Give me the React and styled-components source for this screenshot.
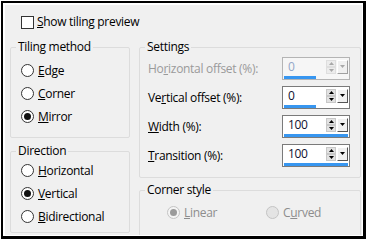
import React from "react";
import styled, { createGlobalStyle } from "styled-components";

const GlobalStyle = createGlobalStyle`
  html, body { margin: 0; padding: 0; background: #fff; }
  body {
    font-family: "Open Sans", "Noto Sans", sans-serif;
    font-size: 12px;
    letter-spacing: -0.3px;
    color: #000;
  }
  * { box-sizing: border-box; }
`;

const Frame = styled.div`
  margin: 1px 0 0 1px;
  width: 365px;
  height: 238px;
  border: solid #000;
  border-width: 2px 3px 3px 2px;
`;

const Panel = styled.div`
  height: 100%;
  background: #f0f0f0;
  border: solid #fff;
  border-width: 2px 1px 1px 2px;
  overflow: hidden;
  display: flex;
  flex-direction: column;
`;

const CheckRow = styled.label`
  margin-top: 9px;
  height: 16px;
  padding-left: 16px;
  display: flex;
  align-items: center;
  gap: 3px;
  line-height: 16px;
`;

const CheckBox = styled.span`
  width: 13px;
  height: 13px;
  border: 1px solid #333;
  background: #fff;
`;

const Columns = styled.div`
  margin-top: 9px;
  padding-left: 5px;
  display: flex;
  align-items: flex-start;
  gap: 9px;
`;

const Column = styled.div`
  width: ${(p) => p.$width}px;
  display: flex;
  flex-direction: column;
`;

const GroupBox = styled.fieldset`
  margin: ${(p) => p.$gap || 0}px 0 0 0;
  padding: 0;
  min-width: 0;
  border: 1px solid #dcdcdc;
  border-radius: 2px;
`;

const Legend = styled.legend`
  margin-left: 5px;
  padding: 0 2px;
  line-height: 16px;
  font-size: 12px;
`;

const GroupBody = styled.div`
  padding: ${(p) => p.$pad};
  display: flex;
  flex-direction: column;
  gap: ${(p) => p.$gap || 0}px;
`;

const RadioRow = styled.label`
  height: 23px;
  display: flex;
  align-items: center;
  gap: 4px;
  color: ${(p) => (p.$disabled ? "#8d8d8d" : "#000")};
  width: ${(p) => (p.$width ? `${p.$width}px` : "auto")};
`;

const RadioCircle = styled.span`
  width: 13px;
  height: 13px;
  border-radius: 50%;
  border: 1px solid ${(p) => (p.$disabled ? "#c4c4c4" : "#333")};
  background: ${(p) => (p.$disabled ? (p.$checked ? "#f4f4f4" : "#e4e4e4") : "#fff")};
  display: flex;
  align-items: center;
  justify-content: center;
  flex: none;
  &::after {
    content: "";
    width: 7px;
    height: 7px;
    border-radius: 50%;
    background: ${(p) => (p.$disabled ? "#9a9a9a" : "#111")};
    display: ${(p) => (p.$checked ? "block" : "none")};
  }
`;

const Key = styled.u`
  text-decoration: underline;
  text-underline-offset: 1px;
`;

const RadioLine = styled.div`
  display: flex;
  height: 23px;
`;

const SettingRow = styled.div`
  height: 23px;
  display: flex;
  align-items: center;
  justify-content: space-between;
`;

const SettingLabel = styled.span`
  color: ${(p) => (p.$disabled ? "#9a9a9a" : "#000")};
`;

const SpinBox = styled.div`
  width: 68px;
  height: 23px;
  border: 1px solid ${(p) => (p.$disabled ? "#b4b4b4" : "#7a7a7a")};
  background: ${(p) => (p.$disabled ? "#f6f6f6" : "#fff")};
  display: flex;
  flex-direction: column;
`;

const SpinTop = styled.div`
  height: 17px;
  display: flex;
  align-items: center;
  padding-right: 1px;
`;

const SpinValue = styled.span`
  flex: 1;
  padding-left: 5px;
  line-height: 17px;
  color: ${(p) => (p.$disabled ? "#93a6c8" : "#101030")};
`;

const Steppers = styled.div`
  width: 10px;
  height: 14px;
  display: flex;
  flex-direction: column;
  margin-right: 1px;
`;

const StepHalf = styled.div`
  flex: 1;
  display: flex;
  align-items: center;
  justify-content: center;
  background: ${(p) => (p.$disabled ? "#ececec" : "#e2e2e2")};
  border: 1px solid ${(p) => (p.$disabled ? "#dedede" : "#c8c8c8")};
`;

const DropButton = styled.div`
  width: 11px;
  height: 14px;
  display: flex;
  align-items: center;
  justify-content: center;
  background: #f0f0f0;
  border: 1px solid;
  border-color: #fff ${(p) => (p.$disabled ? "#a0a0a0" : "#555")}
    ${(p) => (p.$disabled ? "#a0a0a0" : "#555")} #fff;
`;

const Track = styled.div`
  height: 3px;
  margin: 1px 1px 0 1px;
`;

const Fill = styled.div`
  height: 100%;
  background: #3796f0;
`;

const Arrow = ({ up, color }) => (
  <svg width="5" height="3" viewBox="0 0 5 3">
    <path d={up ? "M0 3 L2.5 0 L5 3 Z" : "M0 0 L5 0 L2.5 3 Z"} fill={color} />
  </svg>
);

function Spin({ value, percent, disabled }) {
  const c = disabled ? "#a8a8a8" : "#000";
  return (
    <SpinBox $disabled={disabled}>
      <SpinTop>
        <SpinValue $disabled={disabled}>{value}</SpinValue>
        <Steppers>
          <StepHalf $disabled={disabled}>
            <Arrow up color={c} />
          </StepHalf>
          <StepHalf $disabled={disabled}>
            <Arrow color={c} />
          </StepHalf>
        </Steppers>
        <DropButton $disabled={disabled}>
          <Arrow color={c} />
        </DropButton>
      </SpinTop>
      <Track>
        <Fill style={{ width: `${percent}%` }} />
      </Track>
    </SpinBox>
  );
}

function Radio({ children, checked, disabled, width }) {
  return (
    <RadioRow $disabled={disabled} $width={width}>
      <RadioCircle $checked={checked} $disabled={disabled} />
      <span>{children}</span>
    </RadioRow>
  );
}

export default function App() {
  return (
    <>
      <GlobalStyle />
      <Frame>
        <Panel>
          <CheckRow>
            <CheckBox />
            <span>
              <Key>S</Key>how tiling preview
            </span>
          </CheckRow>
          <Columns>
            <Column $width={120}>
              <GroupBox>
                <Legend>Tiling method</Legend>
                <GroupBody $pad="4px 0 9px 10px">
                  <Radio>
                    <Key>E</Key>dge
                  </Radio>
                  <Radio>
                    <Key>C</Key>orner
                  </Radio>
                  <Radio checked>
                    <Key>M</Key>irror
                  </Radio>
                </GroupBody>
              </GroupBox>
              <GroupBox $gap={5}>
                <Legend>Direction</Legend>
                <GroupBody $pad="0 0 4px 10px">
                  <Radio>
                    <Key>H</Key>orizontal
                  </Radio>
                  <Radio checked>
                    <Key>V</Key>ertical
                  </Radio>
                  <Radio>
                    <Key>B</Key>idirectional
                  </Radio>
                </GroupBody>
              </GroupBox>
            </Column>
            <Column $width={222}>
              <GroupBox>
                <Legend>Settings</Legend>
                <GroupBody $pad="2px 10px 10px 8px" $gap={6}>
                  <SettingRow>
                    <SettingLabel $disabled>
                      Ho<Key>r</Key>izontal offset (%):
                    </SettingLabel>
                    <Spin value="0" percent={50} disabled />
                  </SettingRow>
                  <SettingRow>
                    <SettingLabel>
                      Ve<Key>r</Key>tical offset (%):
                    </SettingLabel>
                    <Spin value="0" percent={50} />
                  </SettingRow>
                  <SettingRow>
                    <SettingLabel>
                      <Key>W</Key>idth (%):
                    </SettingLabel>
                    <Spin value="100" percent={100} />
                  </SettingRow>
                  <SettingRow>
                    <SettingLabel>
                      <Key>T</Key>ransition (%):
                    </SettingLabel>
                    <Spin value="100" percent={100} />
                  </SettingRow>
                </GroupBody>
              </GroupBox>
              <GroupBox $gap={4}>
                <Legend>Corner style</Legend>
                <GroupBody $pad="3px 0 24px 27px">
                  <RadioLine>
                    <Radio checked disabled width={99}>
                      <Key>L</Key>inear
                    </Radio>
                    <Radio disabled>
                      C<Key>u</Key>rved
                    </Radio>
                  </RadioLine>
                </GroupBody>
              </GroupBox>
            </Column>
          </Columns>
        </Panel>
      </Frame>
    </>
  );
}
